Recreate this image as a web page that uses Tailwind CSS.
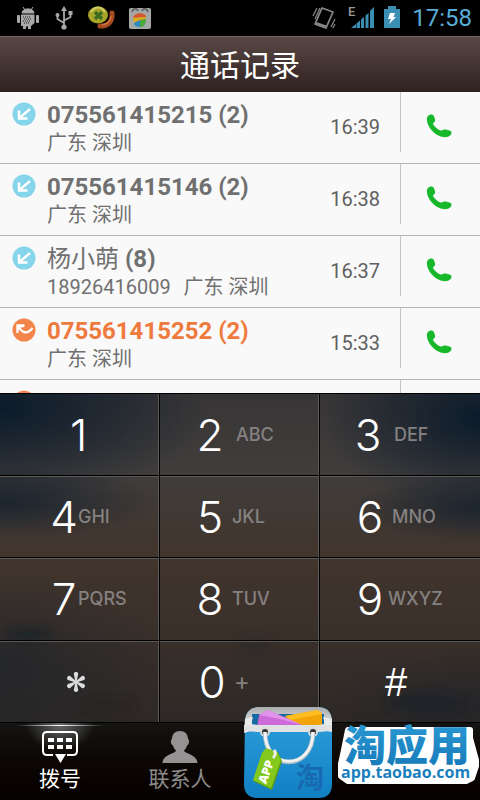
<!DOCTYPE html>
<html lang="zh-CN">
<head>
  <meta charset="UTF-8">
  <meta name="viewport" content="width=device-width, initial-scale=1.0">
  <title>通话记录</title>
  <script src="https://cdn.jsdelivr.net/npm/@tailwindcss/browser@4"></script>
</head>
<body class="bg-black font-[Roboto,'Noto_Sans_CJK_SC',sans-serif]">
  <!-- Shared icons -->
  <svg class="hidden">
    <symbol id="icon-in" viewBox="0 0 24 24">
      <circle cx="12" cy="12" r="11.5" fill="#86d5ea"/>
      <path d="M18 7 8 15.500M7 8.500V16.500H15.500" fill="none" stroke="#fff" stroke-width="2.400"/>
    </symbol>
    <symbol id="icon-missed" viewBox="0 0 24 24">
      <circle cx="12" cy="12" r="11.500" fill="#f4854a"/>
      <path d="M5.500 15V7.500H12.500M6 8C10 15 15 17 20.500 10" fill="none" stroke="#fff" stroke-width="2.300"/>
      <path d="M6 9 12 8" stroke="#fff" stroke-width="2"/>
    </symbol>
    <symbol id="icon-call" viewBox="0 0 26 24">
      <path d="M1 4C1 2 4 0 6 .5 8 1 9.500 5 9 7 8.500 8.500 7 8.500 7 9.500 8 12.500 11 15 14.500 16.500 16 17 16.500 15.500 18 15.500 20.500 15.200 25 16.500 25.500 18 26 20.500 23.500 22.500 21 23 11 24.500 0 13 1 4Z" fill="#17b92b"/>
    </symbol>
  </svg>

  <div class="relative flex flex-col min-h-screen">
    <!-- Status bar -->
    <div class="flex items-center justify-between h-9 pl-4 pr-2 bg-black">
      <div class="flex items-center gap-3">
        <svg class="w-6 h-6" viewBox="0 0 24 24" fill="#a9a9a9">
          <path d="M6 7C6 1.500 18 1.500 18 7ZM7 1l2 3M17 1l-2 3" stroke="#a9a9a9"/>
          <path d="M5 8.500H18.500V17L15 20V23H12V20.500H10V23H7V20H5Z"/>
          <rect x="1" y="9" width="3" height="8" rx="1"/>
          <rect x="20" y="9" width="3" height="8" rx="1"/>
          <path d="M7 11h7M8 13h7M7 15h7M8 17h5" stroke="#222" stroke-dasharray="1 1"/>
        </svg>
        <svg class="w-6 h-6" viewBox="0 0 24 24" fill="none" stroke="#a9a9a9" stroke-width="1.800">
          <path d="M12 4V21M12 17 5.500 13V9M12 14.500 18.500 11V7"/>
          <path d="M12 0 15 5H9ZM16.500 5h4v4h-4Z" fill="#a9a9a9" stroke="none"/>
          <circle cx="5.500" cy="9" r="2" fill="#a9a9a9" stroke="none"/>
          <circle cx="12" cy="21" r="2.600" fill="#a9a9a9" stroke="none"/>
        </svg>
        <svg class="w-7 h-6" viewBox="0 0 28 24">
          <path d="M24 7C25 15 20 21 12 20" fill="none" stroke="#a44a22" stroke-width="5" stroke-linecap="round"/>
          <path d="M23 10C23 15 18 19 14 19" fill="none" stroke="#d0743c" stroke-width="1.500"/>
          <ellipse cx="10" cy="9" rx="10" ry="8.500" fill="#a8a52b"/>
          <path d="M3 6C7 0 13 0 17 6" fill="none" stroke="#d2cb62" stroke-width="2"/>
          <path d="M7 6 14 13M14 6 7 13" stroke="#3f6d20" stroke-width="3.500"/>
        </svg>
        <svg class="w-6 h-6" viewBox="0 0 24 24">
          <rect x="1" y="2" width="22" height="21" rx="2" fill="#a4a9a8"/>
          <path d="M4 6C5 2 9 2 10 5M14 5C15 2 19 2 20 6" fill="none" stroke="#666" stroke-width="2"/>
          <path d="M5 12C6 6 18 6 18 11Z" fill="#d5562c"/>
          <path d="M5 12 18 11 17 14 6 17Z" fill="#dca81e"/>
          <path d="M6 17 12 14V21C9 21 6 20 6 17Z" fill="#2a8bc4"/>
          <path d="M12 14 18 13C18 18 16 21 12 21Z" fill="#47a63c"/>
        </svg>
      </div>
      <div class="flex items-center">
        <svg class="w-6 h-6 mr-3" viewBox="0 0 24 24" fill="none" stroke="#858585" stroke-width="1.300">
          <path d="M10 2 21 6 14 22 3 18Z" stroke-width="1.800" stroke-linejoin="round"/>
          <path d="M4 17.500 14 21" stroke-width="3"/>
          <path d="M1 10 5 2M3 13 8 2M19 21 23 13M21 22 23 18"/>
        </svg>
        <svg class="w-7 h-6 mr-2" viewBox="0 0 28 24" fill="#3b8fb2">
          <text x="0" y="10" class="font-[Roboto] text-[13px] font-medium" fill="#999">E</text>
          <path d="M3 22 8 18V22ZM8.500 22V17.500L12 14.500V22ZM13 22V13.500L16 11V22ZM17.500 22V9.500L20.500 7V22ZM22 22V5L26 1V22Z"/>
        </svg>
        <svg class="w-4 h-6 mr-3" viewBox="0 0 16 24">
          <path d="M4 0H12V3H16V22H0V3H4Z" fill="#3b8fb2"/>
          <path d="M6 7H11L9.500 11H12L5 18 7 13H4Z" fill="#fff"/>
        </svg>
        <span class="text-2xl leading-none text-[#58acd6]">17:58</span>
      </div>
    </div>

    <header class="flex items-center justify-center h-14 pt-0.5 border-t border-[#75645f] bg-linear-to-b from-[#5a4845] to-[#2e2221]">
      <h1 class="text-[30px] leading-none text-white">通话记录</h1>
    </header>

    <!-- Call log -->
    <ul class="h-[301px] overflow-hidden bg-[#f9f9f9] text-[#707070]">
      <li class="flex h-18 border-b border-[#b4b4b6]">
        <svg class="w-6 h-6 ml-3 mt-2.5 mr-[11px] shrink-0"><use href="#icon-in"/></svg>
        <div class="flex-1 pt-2">
          <p class="text-2xl leading-[30px] font-bold">075561415215 (2)</p>
          <p class="text-[20px] leading-[26px]">广东 深圳</p>
        </div>
        <time class="pr-5 text-xl leading-[71px] text-[#606060]">16:39</time>
        <button class="flex items-center justify-center w-20 h-15 pt-2 pr-1 border-l border-[#c4c4c4]" aria-label="拨打 075561415215"><svg class="w-[26px] h-6"><use href="#icon-call"/></svg></button>
      </li>
      <li class="flex h-18 border-b border-[#b4b4b6]">
        <svg class="w-6 h-6 ml-3 mt-2.5 mr-[11px] shrink-0"><use href="#icon-in"/></svg>
        <div class="flex-1 pt-2">
          <p class="text-2xl leading-[30px] font-bold">075561415146 (2)</p>
          <p class="text-[20px] leading-[26px]">广东 深圳</p>
        </div>
        <time class="pr-5 text-xl leading-[71px] text-[#606060]">16:38</time>
        <button class="flex items-center justify-center w-20 h-15 pt-2 pr-1 border-l border-[#c4c4c4]" aria-label="拨打 075561415146"><svg class="w-[26px] h-6"><use href="#icon-call"/></svg></button>
      </li>
      <li class="flex h-18 border-b border-[#b4b4b6]">
        <svg class="w-6 h-6 ml-3 mt-2.5 mr-[11px] shrink-0"><use href="#icon-in"/></svg>
        <div class="flex-1 pt-2">
          <p class="text-2xl leading-[30px] font-bold"><span class="font-normal">杨小萌</span> (8)</p>
          <p class="text-[20px] leading-[26px]">18926416009 <span class="ml-2">广东 深圳</span></p>
        </div>
        <time class="pr-5 text-xl leading-[71px] text-[#606060]">16:37</time>
        <button class="flex items-center justify-center w-20 h-15 pt-2 pr-1 border-l border-[#c4c4c4]" aria-label="拨打 杨小萌"><svg class="w-[26px] h-6"><use href="#icon-call"/></svg></button>
      </li>
      <li class="flex h-18 border-b border-[#b4b4b6]">
        <svg class="w-6 h-6 ml-3 mt-2.5 mr-[11px] shrink-0"><use href="#icon-missed"/></svg>
        <div class="flex-1 pt-2">
          <p class="text-2xl leading-[30px] font-bold text-[#ee7b3d]">075561415252 (2)</p>
          <p class="text-[20px] leading-[26px]">广东 深圳</p>
        </div>
        <time class="pr-5 text-xl leading-[71px] text-[#606060]">15:33</time>
        <button class="flex items-center justify-center w-20 h-15 pt-2 pr-1 border-l border-[#c4c4c4]" aria-label="拨打 075561415252"><svg class="w-[26px] h-6"><use href="#icon-call"/></svg></button>
      </li>
      <li class="flex h-18">
        <svg class="w-6 h-6 ml-3 mt-2.5 mr-[11px] shrink-0"><use href="#icon-missed"/></svg>
        <div class="flex-1"></div>
        <div class="w-20 border-l border-[#c4c4c4]"></div>
      </li>
    </ul>

    <!-- Keypad -->
    <div class="relative bg-[#35302e]">
      <svg class="absolute inset-0 w-full h-full" viewBox="0 0 480 330" preserveAspectRatio="none">
        <defs>
          <linearGradient id="sky" x2="0" y2="1">
            <stop offset="0" stop-color="#383536"/>
            <stop offset=".24" stop-color="#403d3c"/>
            <stop offset=".48" stop-color="#41352d"/>
            <stop offset=".7" stop-color="#3b312b"/>
            <stop offset="1" stop-color="#2d2826"/>
          </linearGradient>
          <radialGradient id="dusk">
            <stop offset="0" stop-color="#0b1b2b"/>
            <stop offset="1" stop-color="#0b1b2b" stop-opacity="0"/>
          </radialGradient>
          <filter id="soft" x="-20%" y="-50%" width="140%" height="200%"><feGaussianBlur stdDeviation="5"/></filter>
        </defs>
        <rect width="480" height="330" fill="url(#sky)"/>
        <ellipse cx="0" cy="15" rx="210" ry="95" fill="url(#dusk)"/>
        <ellipse cx="480" cy="25" rx="160" ry="90" fill="url(#dusk)"/>
        <ellipse cx="0" cy="110" rx="160" ry="36" fill="url(#dusk)" opacity=".7"/>
        <ellipse cx="480" cy="115" rx="130" ry="34" fill="url(#dusk)" opacity=".7"/>
        <ellipse cx="0" cy="270" rx="170" ry="90" fill="url(#dusk)" opacity=".4"/>
        <ellipse cx="480" cy="310" rx="150" ry="60" fill="url(#dusk)" opacity=".3"/>
        <g filter="url(#soft)" opacity=".7">
          <ellipse cx="30" cy="241" rx="20" ry="5" fill="#182028"/>
          <ellipse cx="255" cy="253" rx="16" ry="8" fill="#29292b"/>
          <ellipse cx="425" cy="310" rx="38" ry="9" fill="#1a222b"/>
          <ellipse cx="110" cy="313" rx="26" ry="5" fill="#25221f"/>
        </g>
      </svg>
      <div class="relative grid grid-cols-3 font-[Inter,sans-serif] text-[44px] leading-none font-light text-white border-t border-black">
        <button class="flex items-center h-[82px] pl-[70px] border-b border-r border-black shadow-[inset_-1px_0_#5d5957]">1</button>
        <button class="flex items-center h-[82px] pl-[36px] gap-3 border-b border-r border-black shadow-[inset_-1px_0_#5d5957]"><span class="w-7">2</span><span class="text-lg font-medium text-[#858180]">ABC</span></button>
        <button class="flex items-center h-[82px] pl-[34px] gap-3 border-b border-black"><span class="w-7">3</span><span class="text-lg font-medium text-[#858180]">DEF</span></button>

        <button class="flex items-center h-[82px] pl-[50px] border-b border-r border-black shadow-[inset_-1px_1px_#5d5957]"><span class="w-7">4</span><span class="text-lg font-medium text-[#858180]">GHI</span></button>
        <button class="flex items-center h-[82px] pl-[36px] gap-2 border-b border-r border-black shadow-[inset_-1px_1px_#5d5957]"><span class="w-7">5</span><span class="text-lg font-medium text-[#858180]">JKL</span></button>
        <button class="flex items-center h-[82px] pl-[36px] gap-2 border-b border-black shadow-[inset_0_1px_#5d5957]"><span class="w-7">6</span><span class="text-lg font-medium text-[#858180]">MNO</span></button>

        <button class="flex items-center h-[83px] pl-[50px] border-b border-r border-black shadow-[inset_-1px_1px_#5d5957]"><span class="w-7">7</span><span class="text-lg font-medium text-[#858180]">PQRS</span></button>
        <button class="flex items-center h-[83px] pl-[36px] gap-2 border-b border-r border-black shadow-[inset_-1px_1px_#5d5957]"><span class="w-7">8</span><span class="text-lg font-medium text-[#858180]">TUV</span></button>
        <button class="flex items-center h-[83px] pl-[36px] gap-1 border-b border-black shadow-[inset_0_1px_#5d5957]"><span class="w-7">9</span><span class="text-lg font-medium text-[#858180]">WXYZ</span></button>

        <button class="flex items-center h-[82px] pl-[66px] border-b border-r border-black shadow-[inset_-1px_1px_#5d5957]" aria-label="星号">
          <svg class="w-5 h-5" viewBox="0 0 20 20" fill="#dcdcdc">
            <path id="petal" d="M9.400 10 7.800 2C7.800-.6 12.200-.6 12.200 2L10.600 10 12.200 18C12.200 20.600 7.800 20.600 7.800 18Z"/>
            <use href="#petal" transform="rotate(60 10 10)"/>
            <use href="#petal" transform="rotate(120 10 10)"/>
          </svg>
        </button>
        <button class="flex items-center h-[82px] pl-[38px] gap-2 border-b border-r border-black shadow-[inset_-1px_1px_#5d5957]"><span class="w-7">0</span><span class="text-2xl font-normal text-[#858180]">+</span></button>
        <button class="flex items-center h-[82px] pl-[65px] border-b border-black shadow-[inset_0_1px_#5d5957]"><span class="font-['Liberation_Sans',sans-serif] text-[40px]">#</span></button>
      </div>
    </div>

    <!-- Bottom tabs -->
    <nav class="grid grid-cols-4 flex-1 bg-linear-to-b from-[#141412] to-[#050100] text-[21px] leading-6">
      <button class="relative flex flex-col items-center pt-2 text-white bg-[radial-gradient(ellipse_34px_26px_at_50%_2px,#666,transparent)]">
        <span class="absolute top-0.5 left-4 right-4 h-px bg-linear-to-r from-transparent via-white to-transparent"></span>
        <svg class="w-9 h-8" viewBox="0 0 36 32" fill="#fff">
          <path d="M11 24H5Q1 24 1 20V5Q1 1 5 1H31Q35 1 35 5V20Q35 24 31 24H25" fill="none" stroke="#fff" stroke-width="2"/>
          <path d="M13 23H24L18.500 32Z"/>
          <path d="M6 7h6v4H6ZM15 7h6v4h-6ZM24 7h6v4h-6ZM6 14h6v4H6ZM15 14h6v4h-6ZM24 14h6v4h-6Z"/>
        </svg>
        <span class="mt-1">拨号</span>
      </button>
      <button class="flex flex-col items-center pt-2 text-[#8e8c8b]">
        <svg class="w-9 h-8" viewBox="0 0 36 32" fill="#949292">
          <path d="M18 0C23 0 26 3 26 8 28 9 27 14 25 14.500 24.500 17 23 18.500 22 19.500 22 22.500 35 23 35.500 32H.5C1 23 14 22.500 14 19.500 13 18.500 11.500 17 11 14.500 9 14 8 9 10 8 10 3 13 0 18 0Z"/>
        </svg>
        <span class="mt-1 whitespace-nowrap">联系人</span>
      </button>
    </nav>

    <!-- Store badge -->
    <a href="http://app.taobao.com" class="absolute right-0 bottom-0">
      <svg class="w-60 h-24" viewBox="0 0 240 96">
        <defs>
          <linearGradient id="bag" x2="0" y2="1">
            <stop offset="0" stop-color="#2fa0dc"/>
            <stop offset="1" stop-color="#1180c4"/>
          </linearGradient>
          <linearGradient id="rim" x2="0" y2="1">
            <stop offset="0" stop-color="#a9abad"/>
            <stop offset="1" stop-color="#f0f0f0"/>
          </linearGradient>
          <linearGradient id="brand" x2="0" y2="1">
            <stop offset="0" stop-color="#2e9fd8"/>
            <stop offset="1" stop-color="#1577b6"/>
          </linearGradient>
        </defs>
        <path d="M5 16Q6 4 18 3H79Q91 4 92 16V80Q92 94 78 94H18Q4 94 4 80Z" fill="url(#bag)"/>
        <path d="M5 17Q6 4 18 3H79Q91 4 92 17L86 25H11Z" fill="url(#rim)"/>
        <path d="M12 10H84V24H12Z" fill="#1769a2"/>
        <path d="M45 12 78 6 82 10V23H55Z" fill="#f3a409"/>
        <path d="M45 12 78 6 82 10 50 16Z" fill="#ffbd22"/>
        <path d="M28 6 62 21V24H17L19 11Z" fill="#cb6ad8"/>
        <path d="M28 6 19 11 40 15 62 21Z" fill="#e192ea"/>
        <path d="M5 15 13 13 11 20 18 21H78L85 20 83 13 92 15V28L86 27H11L4 29Z" fill="#e9eaea"/>
        <path d="M4 21H92V26Q85 28 78 28H18Q10 28 4 26Z" fill="#dfe1e2"/>
        <circle cx="25" cy="28" r="5" fill="#dadada"/>
        <circle cx="73" cy="28" r="5" fill="#dadada"/>
        <circle cx="25" cy="28" r="3" fill="#333"/>
        <circle cx="73" cy="28" r="3" fill="#333"/>
        <path d="M25 28C25 68 73 68 73 28" fill="none" stroke="#a9bac4" stroke-width="4.500"/>
        <path d="M25 28C25 67 73 67 73 28" fill="none" stroke="#f0f1f1" stroke-width="3"/>
        <text x="56" y="84" class="font-['Noto_Sans_CJK_SC'] text-[28px] font-bold" fill="#1769b0">淘</text>
        <path d="M26 45 38 48 42 57 32 86 13 77 22 49Z" fill="#5f9f0c"/>
        <path d="M26 44 37 48 41 56 31 84 13 76 22 49Z" fill="#83c81c"/>
        <path d="M33 54Q37 50 34 46" fill="none" stroke="#eee" stroke-width="3"/>
        <text x="-14" y="4" transform="translate(27 66) rotate(-70)" class="font-['Open_Sans'] text-[12px] font-extrabold" fill="#fff">APP</text>
        <path d="M108 26H230V34L236 56V62L232 74 226 77H108L101 72V60L104 46Z" fill="#fff" stroke="#fff" stroke-width="6" stroke-linejoin="round"/>
        <text x="104" y="57" class="font-['Noto_Sans_CJK_SC'] text-[42px] font-black" fill="url(#brand)">淘应用</text>
        <text x="101" y="74" class="font-['Open_Sans'] text-base font-bold" fill="#1a80bd">app.taobao.com</text>
      </svg>
    </a>
  </div>
</body>
</html>
